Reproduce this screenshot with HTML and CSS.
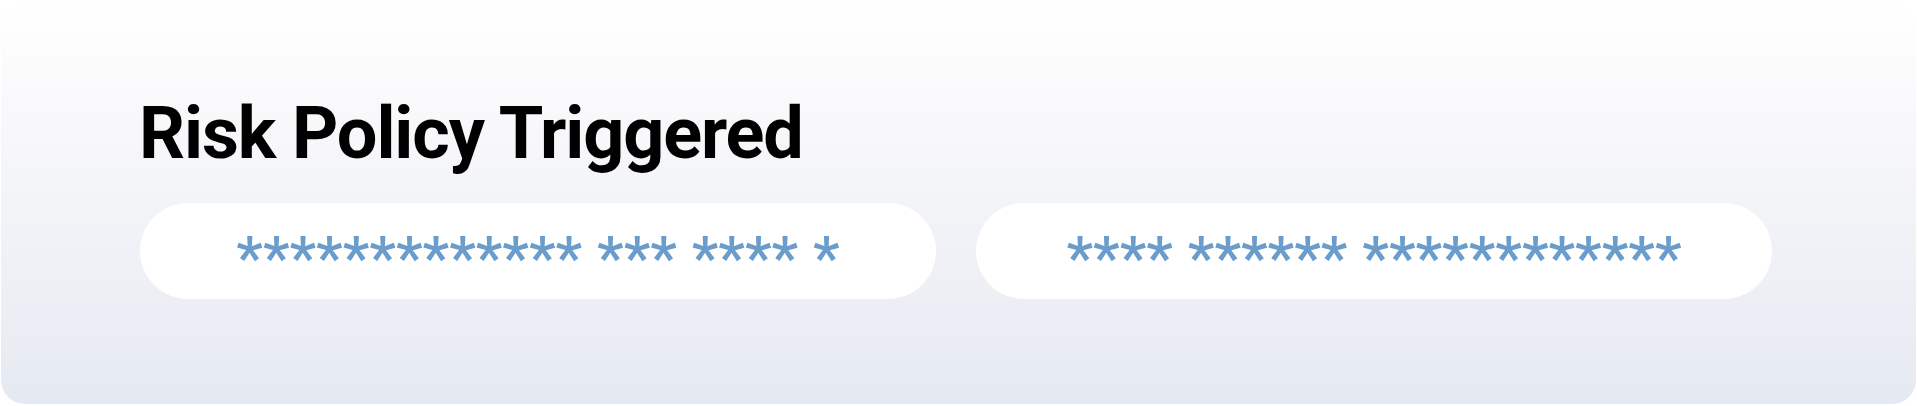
FILE: index.html
```html
<!DOCTYPE html>
<html lang="en">
<head>
<meta charset="utf-8">
<title>Risk Policy Triggered</title>
<link rel="stylesheet" href="styles.css">
</head>
<body>
<div class="card">
  <h1 class="title">Risk Policy Triggered</h1>
  <div class="pills">
    <div class="pill"><span class="mask">************* *** **** *</span></div>
    <div class="pill"><span class="mask">**** ****** ************</span></div>
  </div>
</div>
</body>
</html>
```

FILE: styles.css
```css
html, body {
  margin: 0;
  padding: 0;
  background: #ffffff;
}
body {
  width: 1917px;
  height: 406px;
  font-family: Roboto, "Noto Sans", sans-serif;
}
.card {
  box-sizing: border-box;
  margin: 0 1px;
  height: 404px;
  border-radius: 24px;
  background: linear-gradient(180deg, #ffffff 0%, #f3f4f8 50%, #e5e9f1 100%);
  padding: 98px 0 0 138px;
}
.title {
  margin: 0;
  font-family: Roboto, sans-serif;
  font-weight: 700;
  font-size: 72px;
  line-height: 72px;
  color: #000000;
  letter-spacing: -1.1px;
}
.pills {
  display: flex;
  gap: 40px;
  margin-top: 33px;
  margin-left: 1px;
}
.pill {
  width: 796px;
  height: 96px;
  border-radius: 48px;
  background: #ffffff;
  display: flex;
  align-items: center;
  justify-content: center;
}
.mask {
  font-family: Roboto, sans-serif;
  font-weight: 500;
  font-size: 60px;
  line-height: 60px;
  padding-top: 14px;
  color: #6a9dcb;
  white-space: pre;
}
```
